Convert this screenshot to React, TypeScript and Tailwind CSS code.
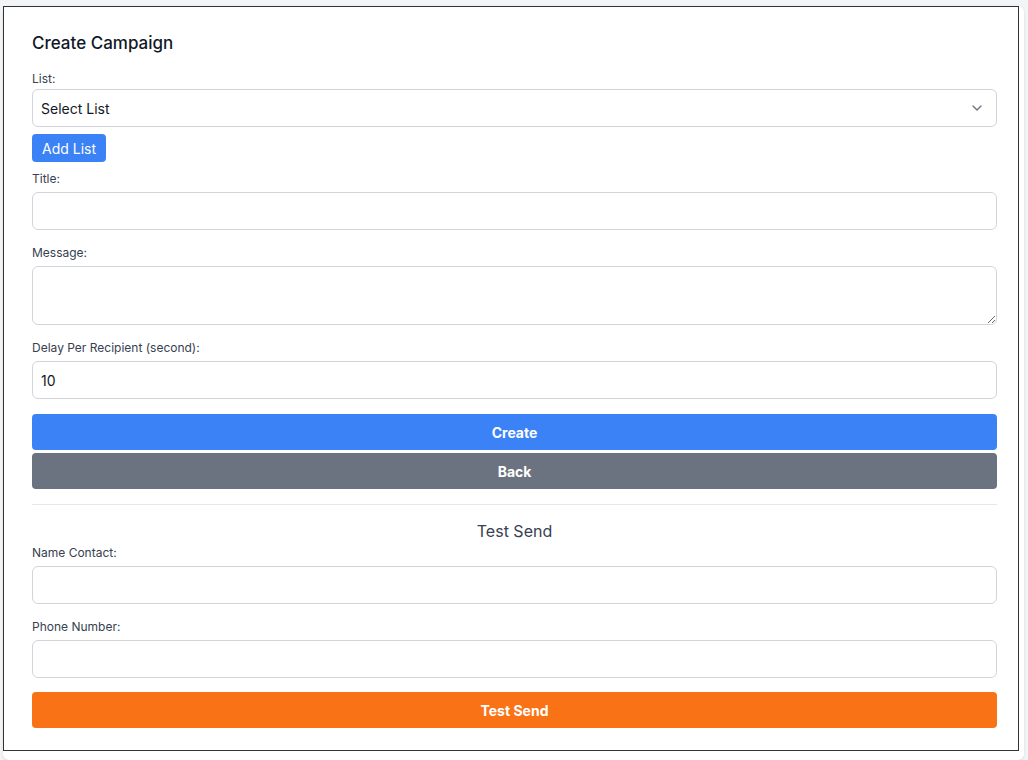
import { ChevronDown } from "lucide-react";

function Label({ children }: { children: React.ReactNode }) {
  return <label className="block text-[12px] leading-[14px] text-[#374151]">{children}</label>;
}

function TextInput({ value }: { value?: string }) {
  return (
    <input
      type="text"
      defaultValue={value}
      className="block w-full h-[38px] rounded-md border border-[#d1d5db] bg-white px-2 text-[14px] text-[#111827] outline-none"
    />
  );
}

export default function App() {
  return (
    <div className="h-[760px] w-[1028px] bg-[#f3f4f6] pl-[3px] pt-[3px]" style={{ fontFamily: "Inter, 'Noto Sans', sans-serif" }}>
      <div className="h-[754px] w-[1021px] rounded-md bg-white shadow-sm">
        <div className="mt-[3px] h-[745px] w-[1016px] border border-[#333] pl-[28px] pr-[21px] pt-[24px]">
          <h1 className="text-[17px] leading-[24px] font-medium text-[#111827]">Create Campaign</h1>

          <div className="mt-[17px]">
            <div className="mb-[3px]">
              <Label>List:</Label>
            </div>
            <div className="relative">
              <select className="block w-full h-[38px] appearance-none rounded-md border border-[#d1d5db] bg-white px-2 text-[14px] text-[#111827] outline-none">
                <option>Select List</option>
              </select>
              <ChevronDown className="pointer-events-none absolute right-[12px] top-[11px] h-4 w-4 text-[#6b7280]" strokeWidth={2} />
            </div>
            <button className="mt-[7px] h-[28px] rounded bg-[#3b82f6] px-[10px] text-[14px] text-white">Add List</button>
          </div>

          <div className="mt-[10px]">
            <div className="mb-[6px]">
              <Label>Title:</Label>
            </div>
            <TextInput />
          </div>

          <div className="mt-[16px]">
            <div className="mb-[6px]">
              <Label>Message:</Label>
            </div>
            <textarea className="block w-full h-[59px] rounded-md border border-[#d1d5db] bg-white px-2 py-1 text-[14px] outline-none" />
          </div>

          <div className="mt-[16px]">
            <div className="mb-[6px]">
              <Label>Delay Per Recipient (second):</Label>
            </div>
            <TextInput value="10" />
          </div>

          <button className="mt-[15px] block h-[36px] w-full rounded bg-[#3b82f6] text-[14px] font-bold text-white">Create</button>
          <button className="mt-[3px] block h-[36px] w-full rounded bg-[#6b7280] text-[14px] font-bold text-white">Back</button>

          <hr className="mt-[15px] border-[#e5e7eb]" />

          <h2 className="mt-[16px] text-center text-[16px] leading-[20px] text-[#374151]">Test Send</h2>

          <div className="mt-[5px]">
            <div className="mb-[6px]">
              <Label>Name Contact:</Label>
            </div>
            <TextInput />
          </div>

          <div className="mt-[16px]">
            <div className="mb-[6px]">
              <Label>Phone Number:</Label>
            </div>
            <TextInput />
          </div>

          <button className="mt-[14px] block h-[36px] w-full rounded bg-[#f97316] text-[14px] font-bold text-white">Test Send</button>
        </div>
      </div>
    </div>
  );
}
